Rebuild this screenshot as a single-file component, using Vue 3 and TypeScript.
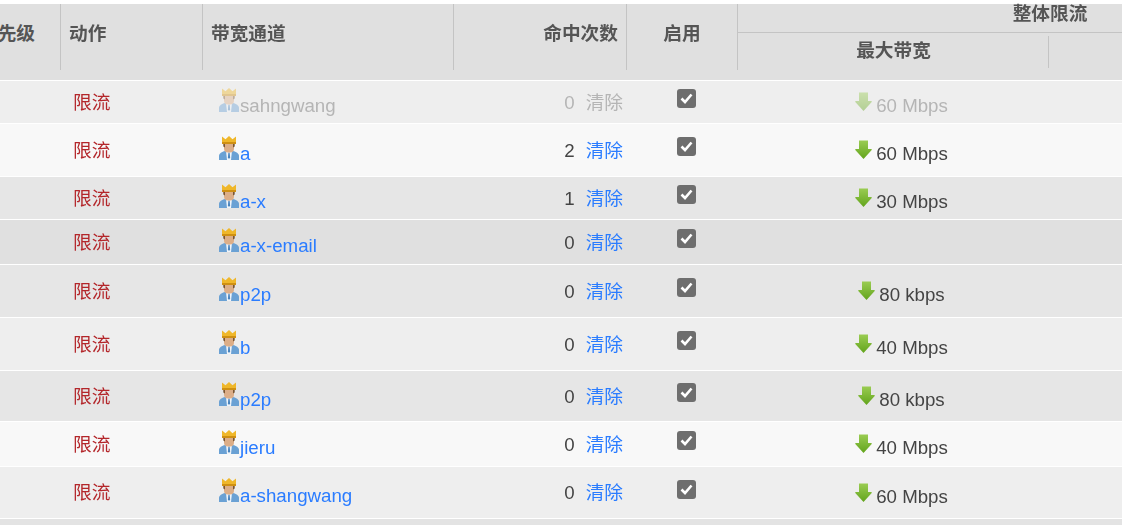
<script setup lang="ts">
interface Row {
  h: number
  bg: string
  name: string
  hits: number
  rate: string
  off?: boolean
}
const rows: Row[] = [
  { h: 42, bg: '#eeeeee', name: 'sahngwang', hits: 0, rate: '60 Mbps', off: true },
  { h: 52, bg: '#f8f8f8', name: 'a', hits: 2, rate: '60 Mbps' },
  { h: 42, bg: '#e6e6e6', name: 'a-x', hits: 1, rate: '30 Mbps' },
  { h: 44, bg: '#e0e0e0', name: 'a-x-email', hits: 0, rate: '' },
  { h: 52, bg: '#e6e6e6', name: 'p2p', hits: 0, rate: '80 kbps' },
  { h: 52, bg: '#eeeeee', name: 'b', hits: 0, rate: '40 Mbps' },
  { h: 50, bg: '#e6e6e6', name: 'p2p', hits: 0, rate: '80 kbps' },
  { h: 44, bg: '#f8f8f8', name: 'jieru', hits: 0, rate: '40 Mbps' },
  { h: 51, bg: '#eeeeee', name: 'a-shangwang', hits: 0, rate: '60 Mbps' }
]
</script>

<template>
  <div class="table">
    <div class="head">
      <div class="hc prio">先级</div>
      <div class="hc">动作</div>
      <div class="hc">带宽通道</div>
      <div class="hc right">命中次数</div>
      <div class="hc center">启用</div>
      <div class="group">
        <div class="group-title">整体限流</div>
        <div class="group-sub">
          <div class="sub-cell">最大带宽</div>
        </div>
      </div>
    </div>
    <div
      v-for="(r, i) in rows"
      :key="i"
      class="row"
      :class="{ off: r.off }"
      :style="{ height: r.h + 'px', background: r.bg }"
    >
      <div></div>
      <div class="action">限流</div>
      <div class="name">
        <svg class="user dim" width="20" height="24" viewBox="0 0 20 24">
          <path d="M0 24v-4c0-2.600 3-4.200 6-5h8c3 .8 6 2.400 6 5v4z" fill="#6aa1d4" />
          <path d="M7 15h6l-1 9H8z" fill="#eef4fa" />
          <path d="M9.400 16.500h1.200l.5 5-1.100 1.500-1.100-1.500z" fill="#4a84bd" />
          <rect x="5" y="6" width="10" height="10.500" rx="4" fill="#dcae88" />
          <path d="M4.300 7h1.700v4.500L4.300 10.500zM14 7h1.700v3.500L14 11.500z" fill="#7a5632" />
          <path d="M3 0.500l3.500 2.800L10 0l3.500 3.300L17 0.500V8H3z" fill="#efb72a" />
          <rect x="3" y="6" width="14" height="2" fill="#cf9012" />
        </svg><span class="link-text">{{ r.name }}</span>
      </div>
      <div class="hits">
        <span class="count">{{ r.hits }}</span><span class="clear">清除</span>
      </div>
      <div class="check">
        <svg class="box" width="19" height="19" viewBox="0 0 19 19">
          <rect width="19" height="19" rx="3" fill="#6e6e6e" />
          <path d="M4.500 9.500l3.500 3.500L14.500 5.500" fill="none" stroke="#fff" stroke-width="2.600" />
        </svg>
      </div>
      <div class="rate">
        <template v-if="r.rate">
          <svg class="arrow dim" width="17" height="19" viewBox="0 0 17 19">
            <defs>
              <linearGradient id="g" x1="0" y1="0" x2="0" y2="1">
                <stop offset="0" stop-color="#9acc52" />
                <stop offset="1" stop-color="#62a41c" />
              </linearGradient>
            </defs>
            <path d="M4 0.500h9v8.500h3.300a.6.600 0 0 1 .4 1L8.500 19 .3 10a.6.600 0 0 1 .4-1H4z" fill="url(#g)" />
          </svg><span class="rate-text">{{ r.rate }}</span>
        </template>
      </div>
      <div></div>
    </div>
    <div class="tail"></div>
  </div>
</template>

<style>
html,
body {
  margin: 0;
  background: #fff;
  overflow: hidden;
}
</style>

<style scoped>
.table {
  width: 1122px;
  height: 525px;
  overflow: hidden;
  padding-top: 4px;
  box-sizing: border-box;
  font-family: "Liberation Sans", "Noto Sans CJK SC", sans-serif;
  font-size: 18.700px;
  color: #444;
  filter: blur(0.35px);
}
.row {
  display: grid;
  grid-template-columns: 60px 142px 251px 173px 111px 311px 74px;
  margin-bottom: 1px;
  align-items: center;
}
.head {
  display: grid;
  grid-template-columns: 61px 142px 251px 173px 111px 384px;
  height: 76px;
  background: #e0e0e0;
  margin-bottom: 1px;
  font-weight: 700;
  color: #555;
}
.hc {
  height: 66px;
  border-right: 1px solid #c4c4c4;
  box-sizing: border-box;
  padding: 0 0 12px 8px;
  display: flex;
  align-items: center;
  white-space: nowrap;
}
.prio {
  padding: 0 25px 12px 0;
  justify-content: flex-end;
  overflow: hidden;
}
.right {
  justify-content: flex-end;
  padding: 0 8px 12px 0;
}
.center {
  justify-content: center;
  padding: 0 0 12px;
}
.group {
  min-width: 0;
}
.group-title {
  height: 28px;
  border-bottom: 1px solid #c4c4c4;
  padding-left: 240px;
  text-align: center;
  line-height: 20px;
}
.group-sub {
  padding-top: 3px;
  height: 33px;
}
.sub-cell {
  width: 311px;
  height: 32px;
  box-sizing: border-box;
  padding: 0 0 8px 1px;
  border-right: 1px solid #c4c4c4;
  display: flex;
  align-items: center;
  justify-content: center;
}
.action {
  padding: 0 0 4px 13px;
  color: #b3262a;
}
.name {
  padding: 0 0 2px 17px;
  display: flex;
  align-items: flex-end;
  color: #2a7cff;
}
.user {
  flex: none;
  margin: 0 1px 3px 0;
}
.link-text {
  line-height: 19px;
}
.hits {
  padding: 0 3px 4px 0;
  display: flex;
  justify-content: flex-end;
  align-items: baseline;
}
.count {
  margin-right: 11px;
}
.clear {
  color: #2a7cff;
}
.check {
  display: flex;
  justify-content: center;
  padding: 0 0 7px 9px;
}
.box {
  display: block;
}
.rate {
  padding: 4px 0 0 18px;
  display: flex;
  justify-content: center;
  align-items: flex-end;
}
.arrow {
  flex: none;
  margin: 0 4px 5px 0;
}
.rate-text {
  line-height: 20px;
}
.off .name,
.off .clear,
.off .count,
.off .rate {
  color: #b5b5b5;
}
.off .dim {
  opacity: 0.42;
}
.tail {
  height: 40px;
  background: #e3e3e3;
}
</style>
